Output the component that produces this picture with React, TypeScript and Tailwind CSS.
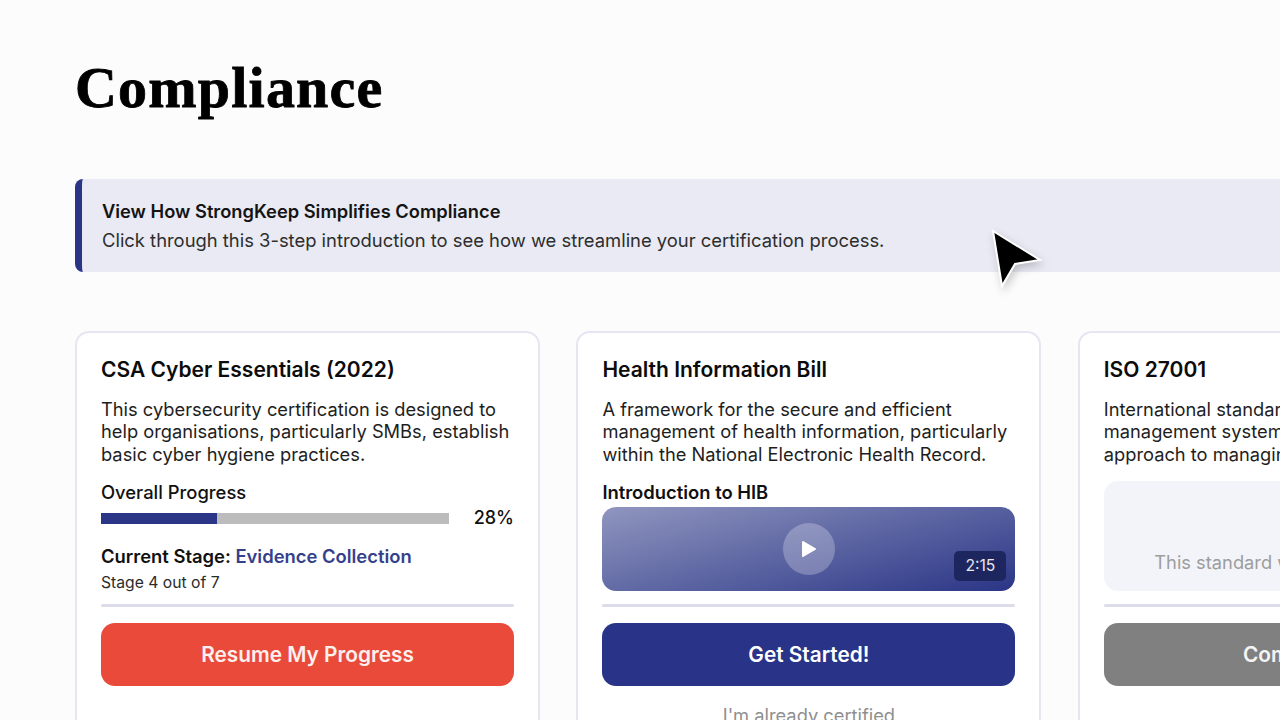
const sans = { fontFamily: 'Inter, "Liberation Sans", sans-serif' };

function Divider() {
  return <div className="h-[3px] rounded-full bg-[#dcdcea]" />;
}

function Card({
  title,
  lines,
  children,
  button,
  buttonClass,
  footer,
}: {
  title: string;
  lines: string[];
  children: React.ReactNode;
  button: string;
  buttonClass: string;
  footer?: string;
}) {
  return (
    <section className="flex h-[420px] w-[465px] shrink-0 flex-col rounded-[14px] border-2 border-[#e6e6f3] bg-white px-6 pt-[23px]">
      <h2 className="text-[21px] font-semibold leading-[28px] text-[#0c0c0c]">{title}</h2>
      <p className="mt-[14px] text-[18.3px] leading-[22.4px] text-[#1e1e1e]">
        {lines.map((line) => (
          <span key={line} className="block whitespace-nowrap">
            {line}
          </span>
        ))}
      </p>
      <div className="mt-[15px] h-[124px]">{children}</div>
      <Divider />
      <button
        className={`mt-4 h-[63px] shrink-0 rounded-[14px] text-[20.8px] font-semibold ${buttonClass}`}
      >
        {button}
      </button>
      {footer && <p className="mt-[18px] text-center text-[18.3px] leading-[22px] text-[#8f8f8f]">{footer}</p>}
    </section>
  );
}

export default function App() {
  return (
    <div style={sans} className="relative h-[720px] w-[1280px] overflow-hidden bg-[#fcfcfd] pl-[75px]">
      <h1
        style={{ fontFamily: '"Liberation Serif", serif' }}
        className="pt-[56px] text-[58px] font-bold leading-[64px] tracking-[1.2px] text-black [-webkit-text-stroke:0.8px_black]"
      >
        Compliance
      </h1>

      <div className="mt-[59px] flex h-[93px] w-[1300px] flex-col justify-center rounded-l-[8px] border-l-[7px] border-[#2a3586] bg-[#e9eaf3] pl-5">
        <p className="text-[18.3px] font-semibold leading-[29px] text-[#141414]">View How StrongKeep Simplifies Compliance</p>
        <p className="text-[18.4px] leading-[29px] text-[#2e2e2e]">
          Click through this 3-step introduction to see how we streamline your certification process.
        </p>
      </div>

      <div className="mt-[59px] flex gap-[36.4px]">
        <Card
          title="CSA Cyber Essentials (2022)"
          lines={[
            'This cybersecurity certification is designed to',
            'help organisations, particularly SMBs, establish',
            'basic cyber hygiene practices.',
          ]}
          button="Resume My Progress"
          buttonClass="bg-[#e94a3a] text-[#fdf0ee]"
        >
          <p className="text-[18.4px] font-medium leading-[24px] text-[#111]">Overall Progress</p>
          <div className="mt-[2px] flex items-center justify-between">
            <div className="h-[11px] w-[348px] bg-[#bcbcbc]">
              <div className="h-full w-[116px] bg-[#2a3586]" />
            </div>
            <span className="text-[18px] font-medium leading-[24px] text-[#111]">28%</span>
          </div>
          <p className="mt-[14px] text-[18.4px] font-semibold leading-[24px] text-[#111]">
            Current Stage: <span className="text-[#35408c]">Evidence Collection</span>
          </p>
          <p className="mt-1 text-[15.7px] leading-[22px] text-[#2b2b2b]">Stage 4 out of 7</p>
        </Card>

        <Card
          title="Health Information Bill"
          lines={[
            'A framework for the secure and efficient',
            'management of health information, particularly',
            'within the National Electronic Health Record.',
          ]}
          button="Get Started!"
          buttonClass="bg-[#293387] text-white"
          footer="I'm already certified"
        >
          <p className="text-[18.4px] font-semibold leading-[24px] text-[#111]">Introduction to HIB</p>
          <div className="relative mt-[3px] flex h-[84px] items-center justify-center rounded-[14px] bg-[linear-gradient(165deg,#9096bf,#2a3586)]">
            <div className="flex h-[52px] w-[52px] items-center justify-center rounded-full bg-white/25">
              <svg width="16" height="18" viewBox="0 0 16 18">
                <path d="M2 2 L14 9 L2 16 Z" fill="white" stroke="white" strokeWidth="2" strokeLinejoin="round" />
              </svg>
            </div>
            <span className="absolute bottom-[10px] right-[9px] flex h-[30px] w-[52px] items-center justify-center rounded-[5px] bg-[#1e2660] text-[15.7px] text-[#e8e8ee]">
              2:15
            </span>
          </div>
        </Card>

        <Card
          title="ISO 27001"
          lines={[
            'International standard for information security',
            'management system, providing a systematic',
            'approach to managing sensitive information.',
          ]}
          button="Coming Soon"
          buttonClass="bg-[#808080] text-[#f4f4f4]"
        >
          <div className="mt-px flex h-[110px] items-end justify-center rounded-[14px] bg-[#f3f4f9] pb-[17px]">
            <p className="text-[18.3px] leading-[24px] text-[#9d9d9d]">This standard will be available soon.</p>
          </div>
        </Card>
      </div>

      <svg
        width="56"
        height="64"
        viewBox="0 0 56 64"
        className="absolute left-[988px] top-[226px] drop-shadow-[2px_4px_4px_rgba(0,0,0,0.2)]"
      >
        <path d="M5 5 L52 34 L27 38 L14 60 Z" fill="black" stroke="white" strokeWidth="2" strokeLinejoin="miter" />
      </svg>
    </div>
  );
}
